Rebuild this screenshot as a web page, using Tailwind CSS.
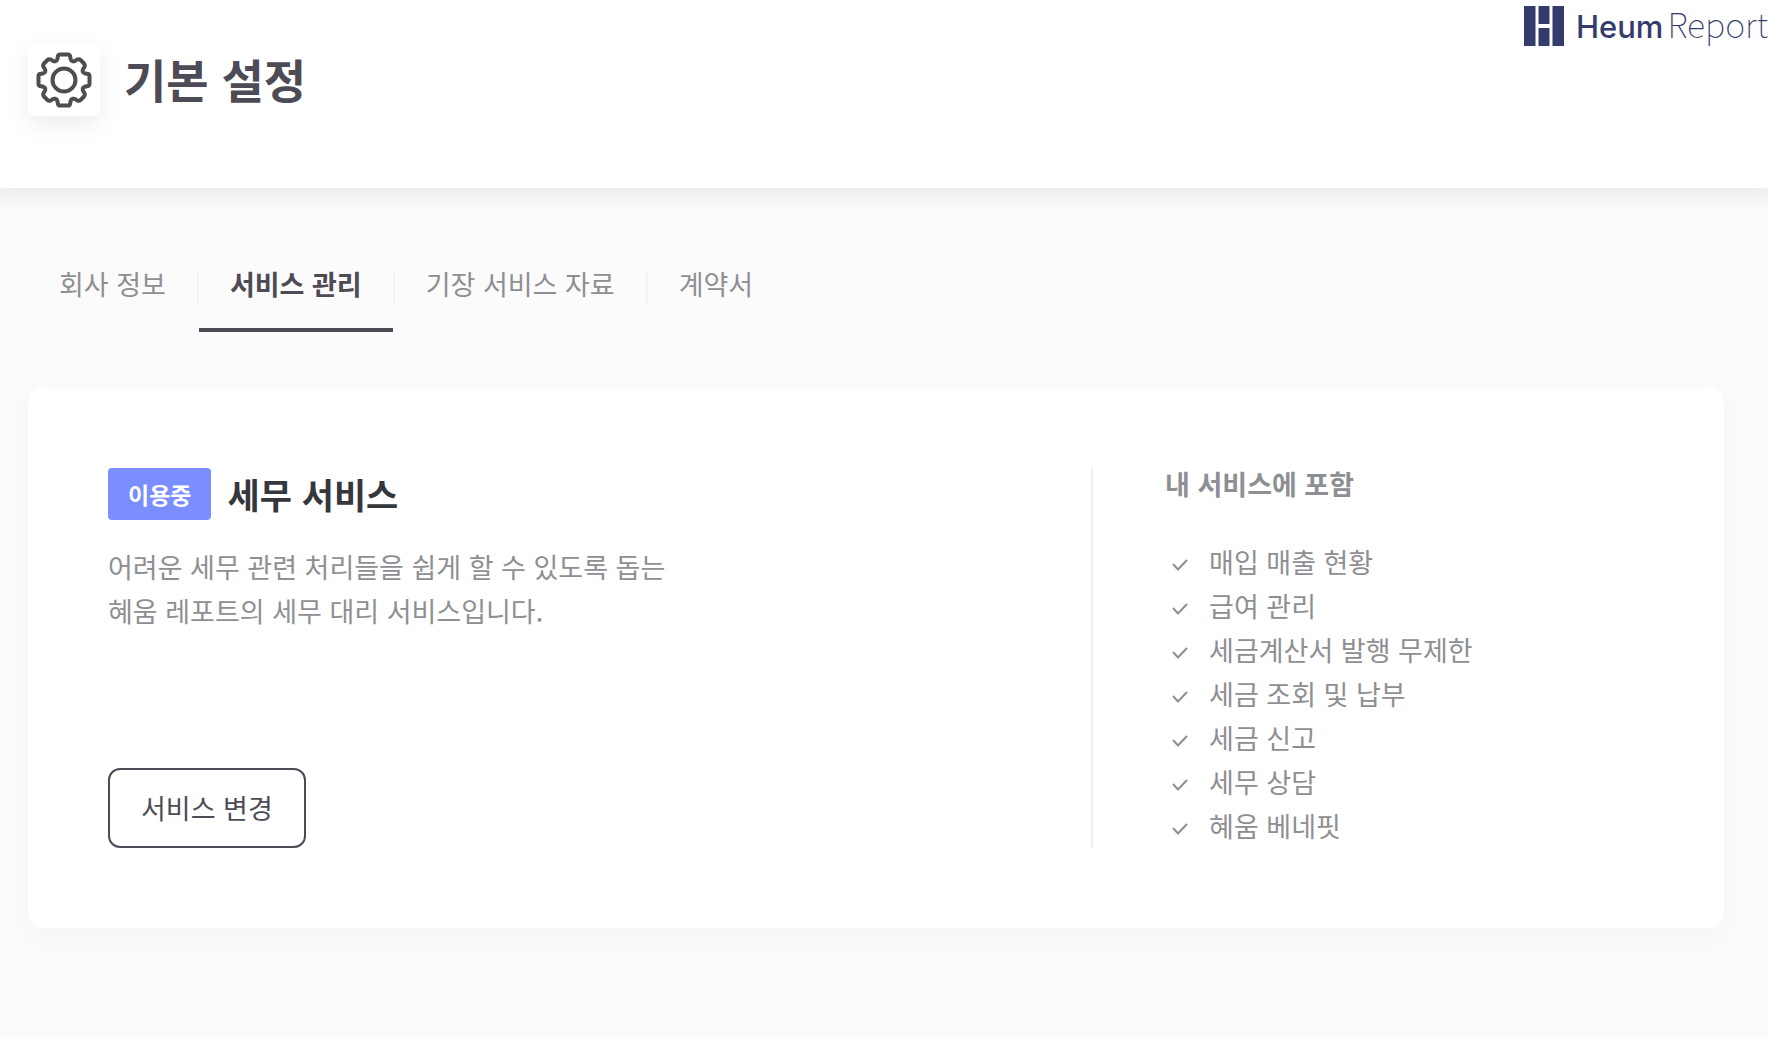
<!DOCTYPE html>
<html lang="ko">

<head>
  <meta charset="UTF-8" />
  <meta name="viewport" content="width=device-width, initial-scale=1.0" />
  <title>기본 설정</title>
  <script src="https://cdn.jsdelivr.net/npm/@tailwindcss/browser@4"></script>
</head>

<body class="min-h-screen bg-[#fbfbfb] font-['Noto_Sans_CJK_KR',sans-serif] text-[27px] leading-11 text-[#8e8f93]">

  <!-- Header -->
  <header class="flex items-start justify-between bg-white pl-7 pb-[72px] shadow-[0_0_20px_8px_rgba(0,0,0,0.07)]">
    <div class="flex items-start gap-6 pt-11">
      <div class="flex size-[72px] items-center justify-center rounded-md bg-white shadow-[0_8px_24px_rgba(0,0,0,0.08)]">
        <svg class="size-14" viewBox="0 0 56 56" fill="none" stroke="#4d4d52" stroke-width="4" stroke-linejoin="round" aria-hidden="true">
          <circle cx="28" cy="28" r="11.5" />
          <path d="M24 2.5H32Q33.500 2.500 34 4L34.800 7.500Q35.200 8.800 36.400 9.200Q38 9.600 39.200 8.800L41 7.600Q43 6.600 44.500 8L48 11.500Q49.400 13 48.400 15L47.200 16.800Q46.400 18 46.800 19.600Q47.200 20.800 48.500 21.200L52 22Q53.500 22.500 53.500 24V32Q53.500 33.500 52 34L48.500 34.800Q47.200 35.200 46.800 36.400Q46.400 38 47.200 39.200L48.400 41Q49.400 43 48 44.500L44.500 48Q43 49.400 41 48.400L39.200 47.200Q38 46.400 36.400 46.800Q35.200 47.200 34.800 48.500L34 52Q33.500 53.500 32 53.500H24Q22.500 53.500 22 52L21.200 48.500Q20.800 47.200 19.600 46.800Q18 46.400 16.800 47.200L15 48.400Q13 49.400 11.500 48L8 44.500Q6.600 43 7.600 41L8.800 39.200Q9.600 38 9.200 36.400Q8.800 35.200 7.500 34.800L4 34Q2.500 33.500 2.500 32V24Q2.500 22.500 4 22L7.500 21.200Q8.800 20.800 9.200 19.600Q9.600 18 8.800 16.800L7.600 15Q6.600 13 8 11.500L11.500 8Q13 6.600 15 7.600L16.800 8.800Q18 9.600 19.600 9.200Q20.800 8.800 21.200 7.500L22 4Q22.500 2.500 24 2.500Z" />
        </svg>
      </div>
      <h1 class="text-[46px] leading-[68px] font-bold text-[#4d4b55]">기본 설정</h1>
    </div>

    <a href="#" class="flex items-center gap-3 pt-1 leading-10 text-[#353c6b]">
      <svg class="size-10" viewBox="0 0 40 40" fill="currentColor" aria-hidden="true">
        <path d="M0 0H11.500V40H0ZM14.500 0H25.500V18H14.500ZM14.500 22H25.500V40H14.500ZM28.500 0H40V40H28.500Z" />
      </svg>
      <span class="flex items-baseline gap-1">
        <span class="font-['Inter',sans-serif] text-[31px] font-medium">Heum</span>
        <span class="text-[34px] font-thin">Report</span>
      </span>
    </a>
  </header>

  <!-- Tabs -->
  <nav class="mt-[62px] ml-7 flex items-start">
    <a href="#" class="px-[31px] pt-3 pb-[26px]">회사 정보</a>
    <span class="mt-[22px] h-8 w-0.5 bg-[#f4f4f5]"></span>
    <a href="#" class="border-b-4 border-[#4d4b55] px-[31px] pt-3 pb-[22px] font-bold text-[#4d4b55]" aria-current="page">서비스 관리</a>
    <span class="mt-[22px] h-8 w-0.5 bg-[#f4f4f5]"></span>
    <a href="#" class="px-[31px] pt-3 pb-[26px]">기장 서비스 자료</a>
    <span class="mt-[22px] h-8 w-0.5 bg-[#f4f4f5]"></span>
    <a href="#" class="px-[31px] pt-3 pb-[26px]">계약서</a>
  </nav>

  <!-- Service card -->
  <main class="mt-14 mr-11 ml-7 flex rounded-2xl bg-white p-20 shadow-[0_8px_32px_rgba(0,0,0,0.03)]">
    <section class="flex flex-1 flex-col items-start">
      <div class="flex items-center gap-4">
        <span class="rounded-sm bg-[#7b8eff] px-5 py-1 text-[23px] font-bold text-white">이용중</span>
        <h2 class="text-[35px] font-bold text-[#36373c]">세무 서비스</h2>
      </div>
      <p class="mt-[25px]">어려운 세무 관련 처리들을 쉽게 할 수 있도록 돕는<br />혜움 레포트의 세무 대리 서비스입니다.</p>
      <button type="button" class="mt-auto rounded-xl border-2 border-[#4d4b55] px-[31px] py-4 text-[#4d4b55]">서비스 변경</button>
    </section>

    <section class="w-[36%] border-l-2 border-[#f0f0f1] pl-[72px]">
      <h3 class="leading-8 font-bold">내 서비스에 포함</h3>
      <ul class="mt-10">
        <li class="flex items-center gap-4">
          <svg class="size-7" viewBox="0 0 28 28" fill="none" stroke="currentColor" stroke-width="2" aria-hidden="true"><path d="M8 16L13 21.500L22 12" /></svg>
          매입 매출 현황
        </li>
        <li class="flex items-center gap-4">
          <svg class="size-7" viewBox="0 0 28 28" fill="none" stroke="currentColor" stroke-width="2" aria-hidden="true"><path d="M8 16L13 21.500L22 12" /></svg>
          급여 관리
        </li>
        <li class="flex items-center gap-4">
          <svg class="size-7" viewBox="0 0 28 28" fill="none" stroke="currentColor" stroke-width="2" aria-hidden="true"><path d="M8 16L13 21.500L22 12" /></svg>
          세금계산서 발행 무제한
        </li>
        <li class="flex items-center gap-4">
          <svg class="size-7" viewBox="0 0 28 28" fill="none" stroke="currentColor" stroke-width="2" aria-hidden="true"><path d="M8 16L13 21.500L22 12" /></svg>
          세금 조회 및 납부
        </li>
        <li class="flex items-center gap-4">
          <svg class="size-7" viewBox="0 0 28 28" fill="none" stroke="currentColor" stroke-width="2" aria-hidden="true"><path d="M8 16L13 21.500L22 12" /></svg>
          세금 신고
        </li>
        <li class="flex items-center gap-4">
          <svg class="size-7" viewBox="0 0 28 28" fill="none" stroke="currentColor" stroke-width="2" aria-hidden="true"><path d="M8 16L13 21.500L22 12" /></svg>
          세무 상담
        </li>
        <li class="flex items-center gap-4">
          <svg class="size-7" viewBox="0 0 28 28" fill="none" stroke="currentColor" stroke-width="2" aria-hidden="true"><path d="M8 16L13 21.500L22 12" /></svg>
          혜움 베네핏
        </li>
      </ul>
    </section>
  </main>

</body>

</html>
